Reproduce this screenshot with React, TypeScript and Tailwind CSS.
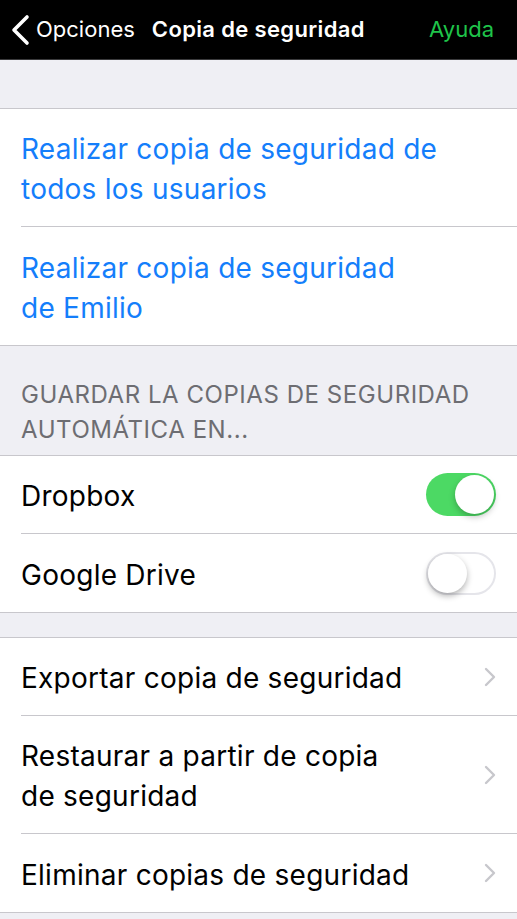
import React from 'react';

const font = { fontFamily: 'Inter, "Liberation Sans", sans-serif' };

const Chevron: React.FC = () => (
	<svg width="12" height="20" viewBox="0 0 12 20" className="shrink-0" aria-hidden="true">
		<path d="M2 2 L10 10 L2 18" fill="none" stroke="#c7c7cc" strokeWidth="2.4" strokeLinecap="round" strokeLinejoin="round" />
	</svg>
);

const Toggle: React.FC<{ on: boolean }> = ({ on }) => (
	<div
		className={
			on
				? 'relative h-[43px] w-[70px] shrink-0 rounded-full bg-[#4cd964]'
				: 'relative h-[43px] w-[70px] shrink-0 rounded-full border-2 border-[#e5e5ea] bg-white'
		}
	>
		<div
			className={
				on
					? 'absolute top-[2px] right-[2px] h-[39px] w-[39px] rounded-full bg-white shadow-[0_3px_6px_rgba(0,0,0,0.25)]'
					: 'absolute top-0 left-0 h-[39px] w-[39px] rounded-full bg-white shadow-[0_3px_6px_rgba(0,0,0,0.3)]'
			}
		/>
	</div>
);

const Row: React.FC<{ children: React.ReactNode; last?: boolean; right?: React.ReactNode; blue?: boolean; tall?: boolean }> = ({
	children,
	last,
	right,
	blue,
	tall,
}) => (
	<div className="pl-[21px]">
		<div
			className={
				'flex items-center justify-between pr-[21px] ' +
				(tall ? 'h-[118px] ' : 'h-[78px] ') +
				(last ? '' : 'border-b border-[#c8c7cc]')
			}
		>
			<div className={'pt-[3px] text-[28px] leading-[40px] tracking-[0.25px] ' + (blue ? 'text-[#147efb]' : 'text-black')}>
				{children}
			</div>
			{right}
		</div>
	</div>
);

export default function App() {
	return (
		<div className="min-h-[919px] w-full bg-[#efeff4]" style={font}>
			{/* Nav bar */}
			<header className="flex h-[60px] items-center justify-between border-b border-[#3a3a3c] bg-black pr-[23px] pl-[10px]">
				<div className="flex items-center">
					<svg width="22" height="32" viewBox="0 0 22 32" aria-hidden="true">
						<path d="M17 3 L4 16 L17 29" fill="none" stroke="white" strokeWidth="3.6" strokeLinecap="round" strokeLinejoin="round" />
					</svg>
					<span className="ml-[4px] text-[22px] text-white">Opciones</span>
					<span className="ml-[17px] text-[22px] font-semibold tracking-[0.35px] text-white">Copia de seguridad</span>
				</div>
				<span className="text-[22px] text-[#1fc44a]">Ayuda</span>
			</header>

			<div className="h-[48px]" />

			<section className="border-y border-[#c8c7cc] bg-white">
				<Row blue tall>
					Realizar copia de seguridad de
					<br />
					todos los usuarios
				</Row>
				<Row blue tall last>
					Realizar copia de seguridad
					<br />
					de Emilio
				</Row>
			</section>

			<div className="px-[21px] pt-[31px] pb-[8px] text-[24px] leading-[35px] tracking-[0.55px] text-[#6d6d72] uppercase">
				Guardar la copias de seguridad
				<br />
				automática en...
			</div>

			<section className="border-y border-[#c8c7cc] bg-white">
				<Row right={<Toggle on />}>Dropbox</Row>
				<Row last right={<Toggle on={false} />}>
					Google Drive
				</Row>
			</section>

			<div className="h-[24px]" />

			<section className="border-y border-[#c8c7cc] bg-white">
				<Row right={<Chevron />}>Exportar copia de seguridad</Row>
				<Row tall right={<Chevron />}>
					Restaurar a partir de copia
					<br />
					de seguridad
				</Row>
				<Row last right={<Chevron />}>
					Eliminar copias de seguridad
				</Row>
			</section>
		</div>
	);
}
